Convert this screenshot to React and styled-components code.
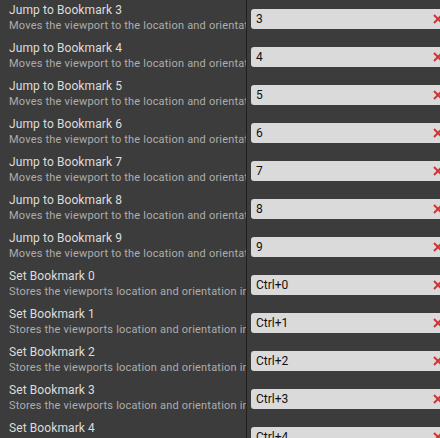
import React from "react";
import styled, { createGlobalStyle } from "styled-components";

const Global = createGlobalStyle`
  html, body { margin: 0; padding: 0; background: #3c3c3c; overflow: hidden; }
  body { font-family: Roboto, "Noto Sans", sans-serif; }
`;

const List = styled.div`
  width: 440px;
  height: 438px;
  overflow: hidden;
  background: #3c3c3c;
`;

const Row = styled.div`
  display: grid;
  grid-template-columns: 246px 1px 1fr;
  height: 38px;
`;

const Info = styled.div`
  padding: 2px 0 0 9px;
  overflow: hidden;
  white-space: nowrap;
  display: flex;
  flex-direction: column;
`;

const Title = styled.div`
  font-size: 12px;
  line-height: 16px;
  letter-spacing: 0.1px;
  color: #dcdcdc;
`;

const Desc = styled.div`
  font-size: 11px;
  line-height: 16px;
  letter-spacing: 0.2px;
  color: #adadad;
`;

const Divider = styled.div`
  background: #1e1e1e;
`;

const Cell = styled.div`
  padding: 9px 0 0 4px;
  overflow: hidden;
`;

const KeyBox = styled.div`
  display: flex;
  align-items: center;
  justify-content: space-between;
  width: 200px;
  height: 20px;
  background: #dadada;
  border-radius: 3px;
  box-sizing: border-box;
  padding: 0 8px 0 5px;
  font-size: 12px;
  color: #111;
`;

const KeyText = styled.span`
  line-height: 20px;
`;

const Clear = styled.svg`
  flex: none;
  display: block;
`;

const rows = [
  ...[3, 4, 5, 6, 7, 8, 9].map((n) => ({
    title: `Jump to Bookmark ${n}`,
    desc: "Moves the viewport to the location and orientation stored at bookmark " + n,
    key: String(n),
  })),
  ...[0, 1, 2, 3, 4].map((n) => ({
    title: `Set Bookmark ${n}`,
    desc: "Stores the viewports location and orientation in bookmark " + n,
    key: `Ctrl+${n}`,
  })),
];

export default function App() {
  return (
    <>
      <Global />
      <List>
        {rows.map((r, i) => (
          <Row key={i}>
            <Info>
              <Title>{r.title}</Title>
              <Desc>{r.desc}</Desc>
            </Info>
            <Divider />
            <Cell>
              <KeyBox>
                <KeyText>{r.key}</KeyText>
                <Clear width="10" height="10" viewBox="0 0 10 10">
                  <path d="M1 1 L9 9 M9 1 L1 9" stroke="#d03434" strokeWidth="2" />
                </Clear>
              </KeyBox>
            </Cell>
          </Row>
        ))}
      </List>
    </>
  );
}
